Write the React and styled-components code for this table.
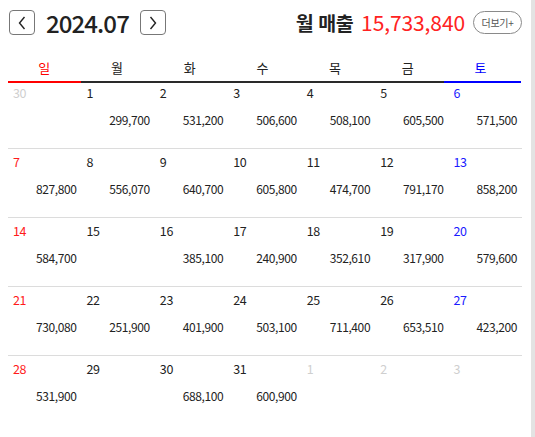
import React from "react";
import styled, { createGlobalStyle } from "styled-components";

const Global = createGlobalStyle`
  html, body { margin: 0; padding: 0; background: #fff; }
  body { font-family: "Noto Sans CJK KR", "Noto Sans", sans-serif; color: #222; }
`;

const Shell = styled.div`
  display: flex;
  min-height: 437px;
`;

const Main = styled.div`
  flex: 1;
  padding: 10px 9px 0 8px;
`;

const Rail = styled.div`
  width: 4px;
  background: #e3e3e3;
`;

const TopBar = styled.div`
  display: flex;
  align-items: center;
  height: 25px;
`;

const NavButton = styled.button`
  width: 26px;
  height: 25px;
  margin-left: ${(p) => (p.$first ? "1px" : "0")};
  padding: 0;
  border: 1px solid #777;
  border-radius: 4px;
  background: #fff;
  display: flex;
  align-items: center;
  justify-content: center;
  color: #222;
`;

const MonthTitle = styled.div`
  font-size: 24px;
  font-weight: 500;
  letter-spacing: -0.9px;
  line-height: 25px;
  margin: 0 11px 0 11px;
  color: #222;
`;

const Spacer = styled.div`
  flex: 1;
`;

const SalesLabel = styled.span`
  font-size: 19.5px;
  font-weight: 700;
  letter-spacing: -0.5px;
  word-spacing: 1px;
  color: #222;
  line-height: 25px;
`;

const SalesValue = styled.span`
  font-size: 21px;
  font-weight: 400;
  color: #ff2222;
  line-height: 25px;
  margin-left: 8px;
  letter-spacing: -0.1px;
`;

const MoreButton = styled.button`
  margin-left: 8px;
  width: 49px;
  height: 23px;
  border: 1px solid #8a8a8a;
  border-radius: 12px;
  background: #fff;
  font-family: "Noto Sans CJK KR", sans-serif;
  font-size: 10px;
  letter-spacing: -0.3px;
  color: #555;
  padding: 0;
`;

const WeekRow = styled.div`
  display: grid;
  grid-template-columns: repeat(7, 72.7px) 1fr;
  margin-top: 20px;
`;

const WeekCell = styled.div`
  height: 26px;
  line-height: 26px;
  text-align: center;
  font-size: 13px;
  color: ${(p) => p.$color};
  border-bottom: 2px solid ${(p) => p.$line};
`;

const WeekTail = styled.div`
  height: 26px;
  border-bottom: 2px dotted #0000ff;
  margin-right: 1px;
`;

const Row = styled.div`
  display: grid;
  grid-template-columns: repeat(7, 1fr);
  border-bottom: ${(p) => (p.$last ? "none" : "1px solid #dcdcdc")};
  padding-top: ${(p) => (p.$first ? "1px" : "4px")};
`;

const Cell = styled.div`
  padding: 0 5px 19px 5px;
  font-size: 12px;
  letter-spacing: -0.4px;
`;

const DateNum = styled.div`
  height: 18px;
  line-height: 18px;
  font-size: 12.5px;
  color: ${(p) => p.$color};
`;

const Amount = styled.div`
  height: 18px;
  line-height: 18px;
  margin-top: 9px;
  text-align: right;
  color: #222;
`;

const Chevron = ({ dir }) => (
  <svg width="8" height="14" viewBox="0 0 8 14">
    <polyline
      points={dir === "left" ? "6.5,1 1.5,7 6.5,13" : "1.5,1 6.5,7 1.5,13"}
      fill="none"
      stroke="#222"
      strokeWidth="1.4"
    />
  </svg>
);

const weekdays = [
  { t: "일", c: "#ff0000", l: "#ff0000" },
  { t: "월", c: "#222", l: "#2a2a2a" },
  { t: "화", c: "#222", l: "#2a2a2a" },
  { t: "수", c: "#222", l: "#2a2a2a" },
  { t: "목", c: "#222", l: "#2a2a2a" },
  { t: "금", c: "#222", l: "#2a2a2a" },
  { t: "토", c: "#0000ff", l: "#0000ff" },
];

const weeks = [
  [
    [30, null, true], [1, "299,700"], [2, "531,200"], [3, "506,600"],
    [4, "508,100"], [5, "605,500"], [6, "571,500"],
  ],
  [
    [7, "827,800"], [8, "556,070"], [9, "640,700"], [10, "605,800"],
    [11, "474,700"], [12, "791,170"], [13, "858,200"],
  ],
  [
    [14, "584,700"], [15, null], [16, "385,100"], [17, "240,900"],
    [18, "352,610"], [19, "317,900"], [20, "579,600"],
  ],
  [
    [21, "730,080"], [22, "251,900"], [23, "401,900"], [24, "503,100"],
    [25, "711,400"], [26, "653,510"], [27, "423,200"],
  ],
  [
    [28, "531,900"], [29, null], [30, "688,100"], [31, "600,900"],
    [1, null, true], [2, null, true], [3, null, true],
  ],
];

const dateColor = (i, other) => {
  if (other) return "#cfcfcf";
  if (i === 0) return "#ff1a1a";
  if (i === 6) return "#1a1aff";
  return "#222";
};

export default function App() {
  return (
    <>
      <Global />
      <Shell>
        <Main>
          <TopBar>
            <NavButton $first aria-label="이전 달">
              <Chevron dir="left" />
            </NavButton>
            <MonthTitle>2024.07</MonthTitle>
            <NavButton aria-label="다음 달">
              <Chevron dir="right" />
            </NavButton>
            <Spacer />
            <SalesLabel>월 매출</SalesLabel>
            <SalesValue>15,733,840</SalesValue>
            <MoreButton>더보기+</MoreButton>
          </TopBar>
          <WeekRow>
            {weekdays.map((w) => (
              <WeekCell key={w.t} $color={w.c} $line={w.l}>
                {w.t}
              </WeekCell>
            ))}
            <WeekTail />
          </WeekRow>
          {weeks.map((week, wi) => (
            <Row key={wi} $first={wi === 0} $last={wi === weeks.length - 1}>
              {week.map(([d, amt, other], i) => (
                <Cell key={i}>
                  <DateNum $color={dateColor(i, other)}>{d}</DateNum>
                  <Amount>{amt || "\u00a0"}</Amount>
                </Cell>
              ))}
            </Row>
          ))}
        </Main>
        <Rail />
      </Shell>
    </>
  );
}
